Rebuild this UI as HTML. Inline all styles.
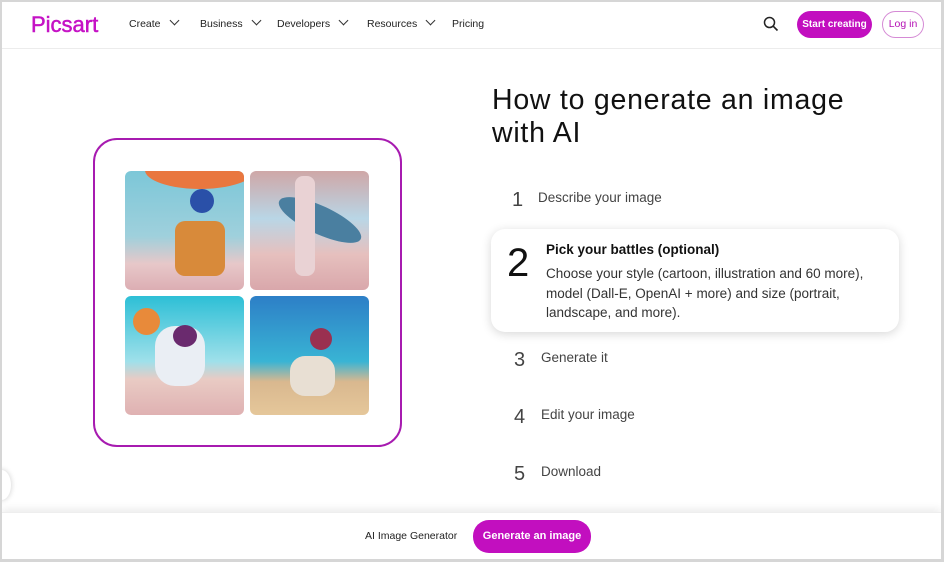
<!DOCTYPE html>
<html><head><meta charset="utf-8"><style>
*{margin:0;padding:0;box-sizing:border-box}
html,body{width:944px;height:562px;overflow:hidden;background:#fff}
body{font-family:"Liberation Sans",sans-serif;color:#111;position:relative}
.frame{position:absolute;left:0;top:0;width:944px;height:562px;border:2px solid #d6d6d6;border-right-width:3px;border-bottom-width:3px;pointer-events:none;z-index:10}
.hdr{position:absolute;left:2px;top:2px;right:3px;height:47px;border-bottom:1px solid #ececec;background:#fff}
.logo{position:absolute;left:29px;top:10px;font-size:22px;color:#c512c5;font-weight:400;-webkit-text-stroke:0.5px #c512c5}
.nav{position:absolute;top:16px;font-size:10.5px;color:#222}
.chev{display:inline-block;width:7px;height:7px;border-right:1.4px solid #333;border-bottom:1.4px solid #333;transform:rotate(45deg);margin-left:10px;position:relative;top:-3px}
.btn{position:absolute;background:#c20fbf;color:#fff;border-radius:16px;font-size:10.5px;font-weight:bold;text-align:center}
.login{position:absolute;left:882px;top:11px;width:42px;height:27px;border:1.3px solid #d58ad5;border-radius:14px;color:#b512b5;font-size:10.5px;text-align:center;line-height:25px}
.box{position:absolute;left:93px;top:138px;width:309px;height:309px;border:2px solid #a71bb0;border-radius:24px}
.im{position:absolute;width:119px;height:119px;border-radius:6px;overflow:hidden}
h1{position:absolute;left:492px;top:84px;font-size:28.5px;font-weight:400;line-height:33px;color:#111;letter-spacing:0.75px}
.n{position:absolute;font-size:20px;color:#444}
.t{position:absolute;font-size:13.5px;color:#444}
.card{position:absolute;left:491px;top:229px;width:408px;height:103px;border-radius:14px;background:#fff;box-shadow:0 2px 10px rgba(0,0,0,.16)}
.bar{position:absolute;left:2px;top:512px;width:939px;height:47px;background:#fff;box-shadow:0 -3px 8px rgba(0,0,0,.08);border-top:1px solid #eee}
</style></head><body>
<div class="frame"></div>
<div class="hdr">
<div class="logo">Picsart</div>
<div class="nav" style="left:127px">Create<span class="chev"></span></div>
<div class="nav" style="left:198px">Business<span class="chev"></span></div>
<div class="nav" style="left:275px">Developers<span class="chev"></span></div>
<div class="nav" style="left:365px">Resources<span class="chev"></span></div>
<div class="nav" style="left:450px">Pricing</div>
<svg style="position:absolute;left:761px;top:14px" width="16" height="16" viewBox="0 0 16 16"><circle cx="6.5" cy="6.5" r="5" fill="none" stroke="#222" stroke-width="1.5"/><line x1="10.2" y1="10.2" x2="14.5" y2="14.5" stroke="#222" stroke-width="1.6"/></svg>
<div class="btn" style="left:795px;top:9px;width:75px;height:27px;line-height:27px;border-radius:14px;font-size:10px">Start creating</div>
<div class="login" style="left:880px;top:9px">Log in</div>
</div>
<div class="box"></div>
<div class="im" style="left:125px;top:171px;background:linear-gradient(180deg,#7cc7d8 0%,#9fd0dc 55%,#e7c8c9 78%,#dcaeb3 100%)">
<div style="position:absolute;left:20px;top:-20px;width:110px;height:38px;border-radius:50%;background:#e9773f"></div>
<div style="position:absolute;left:50px;top:50px;width:50px;height:55px;background:#d88a3a;border-radius:10px"></div>
<div style="position:absolute;left:65px;top:18px;width:24px;height:24px;border-radius:50%;background:#2a50a8"></div></div>
<div class="im" style="left:250px;top:171px;background:linear-gradient(180deg,#cfa7a7 0%,#b9d6e6 40%,#e6c0be 70%,#d9a7ab 100%)">
<div style="position:absolute;left:25px;top:35px;width:90px;height:28px;border-radius:50%;background:#4a7fa0;transform:rotate(25deg)"></div>
<div style="position:absolute;left:45px;top:5px;width:20px;height:100px;background:#e9d2d4;border-radius:8px"></div></div>
<div class="im" style="left:125px;top:296px;background:linear-gradient(180deg,#2dbfd6 0%,#9fe0ea 55%,#e9cbc4 70%,#dfb1b2 100%)">
<div style="position:absolute;left:8px;top:12px;width:27px;height:27px;border-radius:50%;background:#e88a3a"></div>
<div style="position:absolute;left:30px;top:30px;width:50px;height:60px;background:#eaeef4;border-radius:20px"></div>
<div style="position:absolute;left:48px;top:29px;width:24px;height:22px;border-radius:50%;background:#6a2a6e"></div></div>
<div class="im" style="left:250px;top:296px;background:linear-gradient(180deg,#2d7fc7 0%,#39b4d4 55%,#d9b88f 72%,#e5c79a 100%)">
<div style="position:absolute;left:40px;top:60px;width:45px;height:40px;background:#e8dfd3;border-radius:15px"></div>
<div style="position:absolute;left:60px;top:32px;width:22px;height:22px;border-radius:50%;background:#9a3050"></div></div>
<h1>How to generate an image<br>with AI</h1>
<div class="n" style="left:512px;top:189px">1</div><div class="t" style="left:538px;top:190px">Describe your image</div>
<div class="card">
<div style="position:absolute;left:16px;top:12px;font-size:40px;color:#111">2</div>
<div style="position:absolute;left:55px;top:13px;font-size:13.5px;font-weight:bold;color:#111">Pick your battles (optional)</div>
<div style="position:absolute;left:55px;top:35px;font-size:13.5px;line-height:19.5px;color:#333;width:345px">Choose your style (cartoon, illustration and 60 more), model (Dall-E, OpenAI + more) and size (portrait, landscape, and more).</div>
</div>
<div class="n" style="left:514px;top:349px">3</div><div class="t" style="left:541px;top:350px">Generate it</div>
<div class="n" style="left:514px;top:406px">4</div><div class="t" style="left:541px;top:407px">Edit your image</div>
<div class="n" style="left:514px;top:463px">5</div><div class="t" style="left:541px;top:464px">Download</div>
<div style="position:absolute;left:-8px;top:470px;width:19px;height:30px;border-radius:50%;background:#fff;box-shadow:0 0 6px rgba(0,0,0,.2)"></div>
<div class="bar">
<div style="position:absolute;left:363px;top:17px;font-size:10.5px;color:#222">AI Image Generator</div>
<div class="btn" style="left:471px;top:7px;width:118px;height:33px;line-height:33px;font-size:11px">Generate an image</div>
</div>
</body></html>
